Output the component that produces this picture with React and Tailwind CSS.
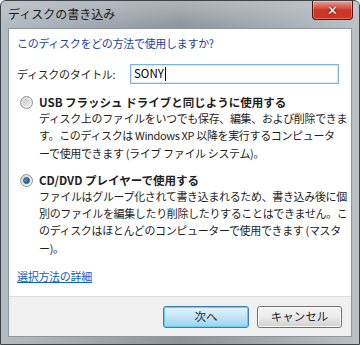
import React from "react";

const jp = { fontFamily: '"Noto Sans CJK JP", "Noto Sans", sans-serif' };

const Radio = ({ checked }) => (
  <span className="mt-[1px] flex h-[13px] w-[13px] shrink-0 items-center justify-center rounded-full border border-[#8f8f8f] bg-gradient-to-br from-[#d9d9d9] to-[#f6f6f6]">
    {checked ? (
      <span className="h-[7px] w-[7px] rounded-full border border-[#1b4f7a] bg-gradient-to-br from-[#56a8e0] to-[#0f4f8c]" />
    ) : (
      <span className="h-[7px] w-[7px] rounded-full bg-gradient-to-br from-[#c8c8c8] to-[#ececec]" />
    )}
  </span>
);

const Option = ({ checked, title, lines }) => (
  <div className="flex gap-[6px]">
    <Radio checked={checked} />
    <div>
      <div className="text-[11.5px] font-bold leading-[15px] text-[#1e1e1e]">{title}</div>
      {lines.map((l, i) => (
        <div key={i} className="whitespace-nowrap text-[11px] leading-[17.3px] tracking-[-0.35px] text-[#1e1e1e]">
          {l}
        </div>
      ))}
    </div>
  </div>
);

export default function App() {
  return (
    <div
      className="relative flex h-[345px] w-[360px] flex-col overflow-hidden rounded-t-[6px] border border-[#3c4248] bg-gradient-to-r from-[#b4bcc3] via-[#8c939a] to-[#b9c0c6]"
      style={jp}
    >
      <div className="flex h-[27px] shrink-0 items-start bg-gradient-to-b from-[#c4cbd1]/60 to-transparent px-[7px] pt-[4px]">
        <span className="text-[12px] leading-[18px] text-[#1b1b1b]">ディスクの書き込み</span>
        <button className="absolute right-[6px] top-0 flex h-[19px] w-[41px] items-center justify-center rounded-b-[4px] border border-t-0 border-[#5a1410] bg-gradient-to-b from-[#e8a093] via-[#c7372a] to-[#d7321d] text-[13px] font-bold leading-none text-white shadow-[inset_0_0_0_1px_rgba(255,255,255,0.3)]">
          <span className="font-['DejaVu_Sans'] [text-shadow:0_0_2px_#400]">✕</span>
        </button>
      </div>

      <div className="mx-[7px] mb-[7px] flex flex-1 flex-col border border-[#8e979f] bg-white">
        <div className="flex flex-1 flex-col px-[8px] pt-[6px]">
          <div className="text-[11px] leading-[16px] tracking-[-0.3px] text-[#1c3fa8]">
            このディスクをどの方法で使用しますか?
          </div>

          <div className="mt-[13px] flex items-center">
            <span className="w-[113px] text-[11px] tracking-[-0.3px] text-[#1e1e1e]">ディスクのタイトル:</span>
            <div className="flex h-[20px] w-[209px] items-center border border-[#7eb4d6] px-[3px] text-[11.5px] text-black shadow-[inset_0_0_0_1px_#d5ebf7]">
              SONY<span className="ml-[1px] h-[14px] w-px bg-black" />
            </div>
          </div>

          <div className="mt-[11px] pl-[3px]">
            <Option
              title="USB フラッシュ ドライブと同じように使用する"
              lines={[
                "ディスク上のファイルをいつでも保存、編集、および削除できま",
                "す。このディスクは Windows XP 以降を実行するコンピュータ",
                "ーで使用できます (ライブ ファイル システム)。",
              ]}
            />
          </div>

          <div className="mt-[11px] pl-[3px]">
            <Option
              checked
              title="CD/DVD プレイヤーで使用する"
              lines={[
                "ファイルはグループ化されて書き込まれるため、書き込み後に個",
                "別のファイルを編集したり削除したりすることはできません。こ",
                "のディスクはほとんどのコンピューターで使用できます (マスタ",
                "ー)。",
              ]}
            />
          </div>

          <a href="#" className="mt-[11px] self-start text-[11px] leading-[16px] tracking-[-0.3px] text-[#0a5fc8] underline">
            選択方法の詳細
          </a>
        </div>

        <div className="flex h-[40px] shrink-0 items-center justify-end gap-[8px] border-t border-[#dfdfdf] bg-[#f0f0f0] pr-[9px]">
          <button className="h-[22px] w-[86px] rounded-[3px] border border-[#3c7fb1] bg-gradient-to-b from-[#e5f4fc] via-[#c4e5f6] to-[#98d1ef] text-[11.5px] text-[#1e1e1e] shadow-[inset_0_0_0_1px_#5fd0f5]">
            次へ
          </button>
          <button className="h-[22px] w-[85px] rounded-[3px] border border-[#707070] bg-gradient-to-b from-[#f2f2f2] via-[#ebebeb] to-[#cfcfcf] text-[11.5px] text-[#1e1e1e] shadow-[inset_0_0_0_1px_#fcfcfc]">
            キャンセル
          </button>
        </div>
      </div>
    </div>
  );
}
